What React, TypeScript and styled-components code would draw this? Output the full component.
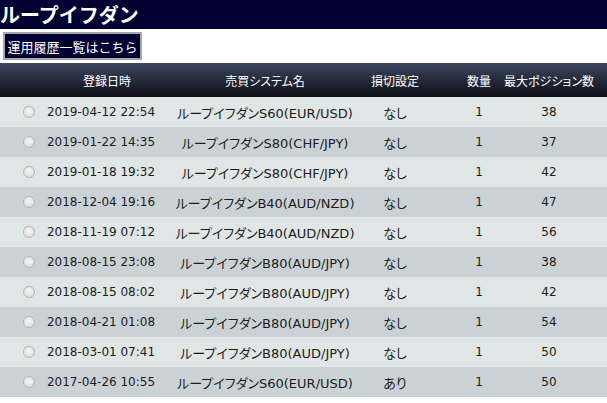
import React from "react";
import styled, { createGlobalStyle } from "styled-components";

const Global = createGlobalStyle`
  html, body { margin: 0; padding: 0; background: #ffffff; }
  body { font-family: "DejaVu Sans", "Noto Sans CJK JP", sans-serif; }
`;

const TitleBar = styled.header`
  height: 29px;
  background: #000033;
  display: flex;
  align-items: center;
`;

const Title = styled.h1`
  margin: 0;
  color: #ffffff;
  font-family: "Noto Sans CJK JP", sans-serif;
  font-size: 20px;
  font-weight: 700;
  line-height: 29px;
`;

const Toolbar = styled.div`
  padding: 3px 0 3px 3px;
  display: flex;
`;

const HistoryButton = styled.button`
  height: 28px;
  width: 139px;
  padding: 0;
  background: #000033;
  color: #ffffff;
  border: 2px solid #a7a7a7;
  font-family: "Noto Sans CJK JP", sans-serif;
  font-size: 13px;
  display: flex;
  align-items: center;
  justify-content: center;
  cursor: pointer;
`;

const cols = "40px 134px 182px 78px 90px 1fr";

const HeaderRow = styled.div`
  display: grid;
  grid-template-columns: ${cols};
  height: 34px;
  background: linear-gradient(#3d4762, #0c0e14);
  color: #ffffff;
  font-family: "Noto Sans CJK JP", sans-serif;
  font-size: 12px;
  font-feature-settings: "palt";
`;

const Row = styled.div<{ $alt: boolean }>`
  display: grid;
  grid-template-columns: ${cols};
  height: 30px;
  background: ${(p) => (p.$alt ? "#cbd2d6" : "#e0e5e5")};
  color: #1c1c1c;
`;

const Cell = styled.div<{ $padRight?: number }>`
  display: flex;
  align-items: center;
  justify-content: center;
  white-space: nowrap;
  padding-right: ${(p) => p.$padRight ?? 0}px;
  min-width: 0;
`;

const RadioCell = styled(Cell)`
  justify-content: flex-start;
`;

const DateCell = styled(Cell)`
  font-family: "DejaVu Sans", sans-serif;
  font-size: 12px;
  padding-right: 12px;
`;

const TextCell = styled(Cell)`
  font-family: "DejaVu Sans", "Noto Sans CJK JP", sans-serif;
  font-size: 13px;
  font-feature-settings: "palt";
`;

const NumCell = styled(Cell)`
  font-family: "DejaVu Sans", sans-serif;
  font-size: 12px;
`;

const Radio = styled.span`
  width: 10px;
  height: 10px;
  border-radius: 50%;
  border: 1px solid #b3b3b3;
  background: radial-gradient(circle at 50% 35%, #f6f6f6, #d9d9d9);
  margin-left: 23px;
`;

type Item = { date: string; system: string; stop: string; qty: number; max: number };

const data: Item[] = [
  { date: "2019-04-12 22:54", system: "ループイフダンS60(EUR/USD)", stop: "なし", qty: 1, max: 38 },
  { date: "2019-01-22 14:35", system: "ループイフダンS80(CHF/JPY)", stop: "なし", qty: 1, max: 37 },
  { date: "2019-01-18 19:32", system: "ループイフダンS80(CHF/JPY)", stop: "なし", qty: 1, max: 42 },
  { date: "2018-12-04 19:16", system: "ループイフダンB40(AUD/NZD)", stop: "なし", qty: 1, max: 47 },
  { date: "2018-11-19 07:12", system: "ループイフダンB40(AUD/NZD)", stop: "なし", qty: 1, max: 56 },
  { date: "2018-08-15 23:08", system: "ループイフダンB80(AUD/JPY)", stop: "なし", qty: 1, max: 38 },
  { date: "2018-08-15 08:02", system: "ループイフダンB80(AUD/JPY)", stop: "なし", qty: 1, max: 42 },
  { date: "2018-04-21 01:08", system: "ループイフダンB80(AUD/JPY)", stop: "なし", qty: 1, max: 54 },
  { date: "2018-03-01 07:41", system: "ループイフダンB80(AUD/JPY)", stop: "なし", qty: 1, max: 50 },
  { date: "2017-04-26 10:55", system: "ループイフダンS60(EUR/USD)", stop: "あり", qty: 1, max: 50 },
];

export default function App() {
  return (
    <>
      <Global />
      <TitleBar>
        <Title>ループイフダン</Title>
      </TitleBar>
      <Toolbar>
        <HistoryButton>運用履歴一覧はこちら</HistoryButton>
      </Toolbar>
      <HeaderRow>
        <Cell />
        <Cell>登録日時</Cell>
        <Cell>売買システム名</Cell>
        <Cell>損切設定</Cell>
        <Cell>数量</Cell>
        <Cell $padRight={33}>最大ポジション数</Cell>
      </HeaderRow>
      {data.map((d, i) => (
        <Row key={i} $alt={i % 2 === 1}>
          <RadioCell>
            <Radio />
          </RadioCell>
          <DateCell>{d.date}</DateCell>
          <TextCell>{d.system}</TextCell>
          <TextCell>{d.stop}</TextCell>
          <NumCell>{d.qty}</NumCell>
          <NumCell $padRight={33}>{d.max}</NumCell>
        </Row>
      ))}
    </>
  );
}
